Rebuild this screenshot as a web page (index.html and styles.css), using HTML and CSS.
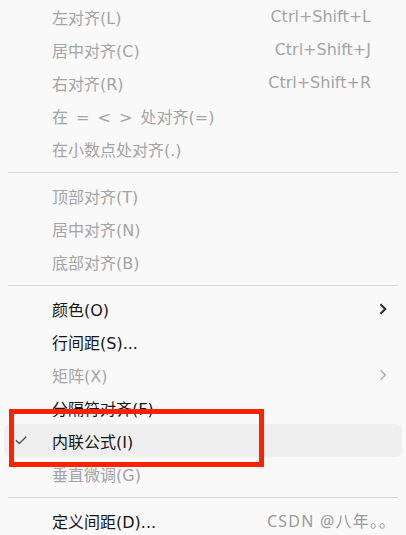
FILE: index.html
```html
<!DOCTYPE html>
<html lang="zh-CN">
<head>
<meta charset="utf-8">
<link rel="stylesheet" href="styles.css">
</head>
<body>
<div class="menu">
  <div class="item disabled"><span class="check"></span><span class="label">左对齐(L)</span><span class="key">Ctrl+Shift+L</span><span class="sub"></span></div>
  <div class="item disabled"><span class="check"></span><span class="label">居中对齐(C)</span><span class="key">Ctrl+Shift+J</span><span class="sub"></span></div>
  <div class="item disabled"><span class="check"></span><span class="label">右对齐(R)</span><span class="key">Ctrl+Shift+R</span><span class="sub"></span></div>
  <div class="item disabled"><span class="check"></span><span class="label wide">在 = &lt; &gt; 处对齐(=)</span><span class="key"></span><span class="sub"></span></div>
  <div class="item disabled"><span class="check"></span><span class="label">在小数点处对齐(.)</span><span class="key"></span><span class="sub"></span></div>
  <div class="sep"></div>
  <div class="item disabled"><span class="check"></span><span class="label">顶部对齐(T)</span><span class="key"></span><span class="sub"></span></div>
  <div class="item disabled"><span class="check"></span><span class="label">居中对齐(N)</span><span class="key"></span><span class="sub"></span></div>
  <div class="item disabled"><span class="check"></span><span class="label">底部对齐(B)</span><span class="key"></span><span class="sub"></span></div>
  <div class="sep"></div>
  <div class="item"><span class="check"></span><span class="label">颜色(O)</span><span class="key"></span><span class="sub"><svg width="8" height="12" viewBox="0 0 8 12"><path d="M1.5 1.2 L6.3 6 L1.5 10.8" fill="none" stroke="currentColor" stroke-width="2"/></svg></span></div>
  <div class="item"><span class="check"></span><span class="label">行间距(S)...</span><span class="key"></span><span class="sub"></span></div>
  <div class="item disabled"><span class="check"></span><span class="label">矩阵(X)</span><span class="key"></span><span class="sub"><svg width="8" height="12" viewBox="0 0 8 12"><path d="M1.5 1.2 L6.3 6 L1.5 10.8" fill="none" stroke="currentColor" stroke-width="1.6"/></svg></span></div>
  <div class="item"><span class="check"></span><span class="label">分隔符对齐(F)</span><span class="key"></span><span class="sub"></span></div>
  <div class="item active"><span class="check"><svg width="12" height="9" viewBox="0 0 12 9"><path d="M0.8 4.2 L4.2 7.6 L11.2 0.8" fill="none" stroke="currentColor" stroke-width="1.4"/></svg></span><span class="label">内联公式(I)</span><span class="key"></span><span class="sub"></span></div>
  <div class="item disabled"><span class="check"></span><span class="label">垂直微调(G)</span><span class="key"></span><span class="sub"></span></div>
  <div class="sep"></div>
  <div class="item"><span class="check"></span><span class="label">定义间距(D)...</span><span class="key"></span><span class="sub"></span></div>
  <div class="mark"></div>
  <div class="watermark">CSDN @八年。。</div>
</div>
</body>
</html>
```

FILE: styles.css
```css
html, body {
  margin: 0;
  padding: 0;
  background: #f9f9f9;
}
.menu {
  position: relative;
  width: 406px;
  height: 535px;
  overflow: hidden;
  background: #f9f9f9;
  font-family: "DejaVu Sans", "Noto Sans CJK SC", sans-serif;
  font-size: 16px;
  color: #151515;
}
.item {
  display: grid;
  grid-template-columns: 48px 1fr auto 31px;
  align-items: center;
  height: 33px;
  margin: 0 4px;
  border-radius: 6px;
}
.item.disabled {
  color: #a4a4a4;
}
.item.active {
  background: #efefef;
}
.check {
  display: flex;
  align-items: center;
  padding-left: 11px;
  color: #555;
}
.label {
  white-space: nowrap;
}
.label.wide {
  word-spacing: 3px;
}
.key {
  white-space: nowrap;
  text-align: right;
}
.sub {
  display: flex;
  align-items: center;
  padding-left: 8px;
  color: #2a2a2a;
}
.item.disabled .sub {
  color: #b0b0b0;
}
.sep {
  height: 1px;
  background: #d8d8d8;
  margin: 7px 8px 6px 8px;
}
.mark {
  position: absolute;
  left: 9px;
  top: 409px;
  width: 245px;
  height: 48px;
  border: 5px solid #fe2200;
}
.watermark {
  position: absolute;
  left: 267px;
  top: 508px;
  font-family: "Noto Sans", "Noto Sans CJK SC", sans-serif;
  font-size: 16px;
  letter-spacing: 1.2px;
  color: #9a9a9a;
  white-space: nowrap;
}
```
